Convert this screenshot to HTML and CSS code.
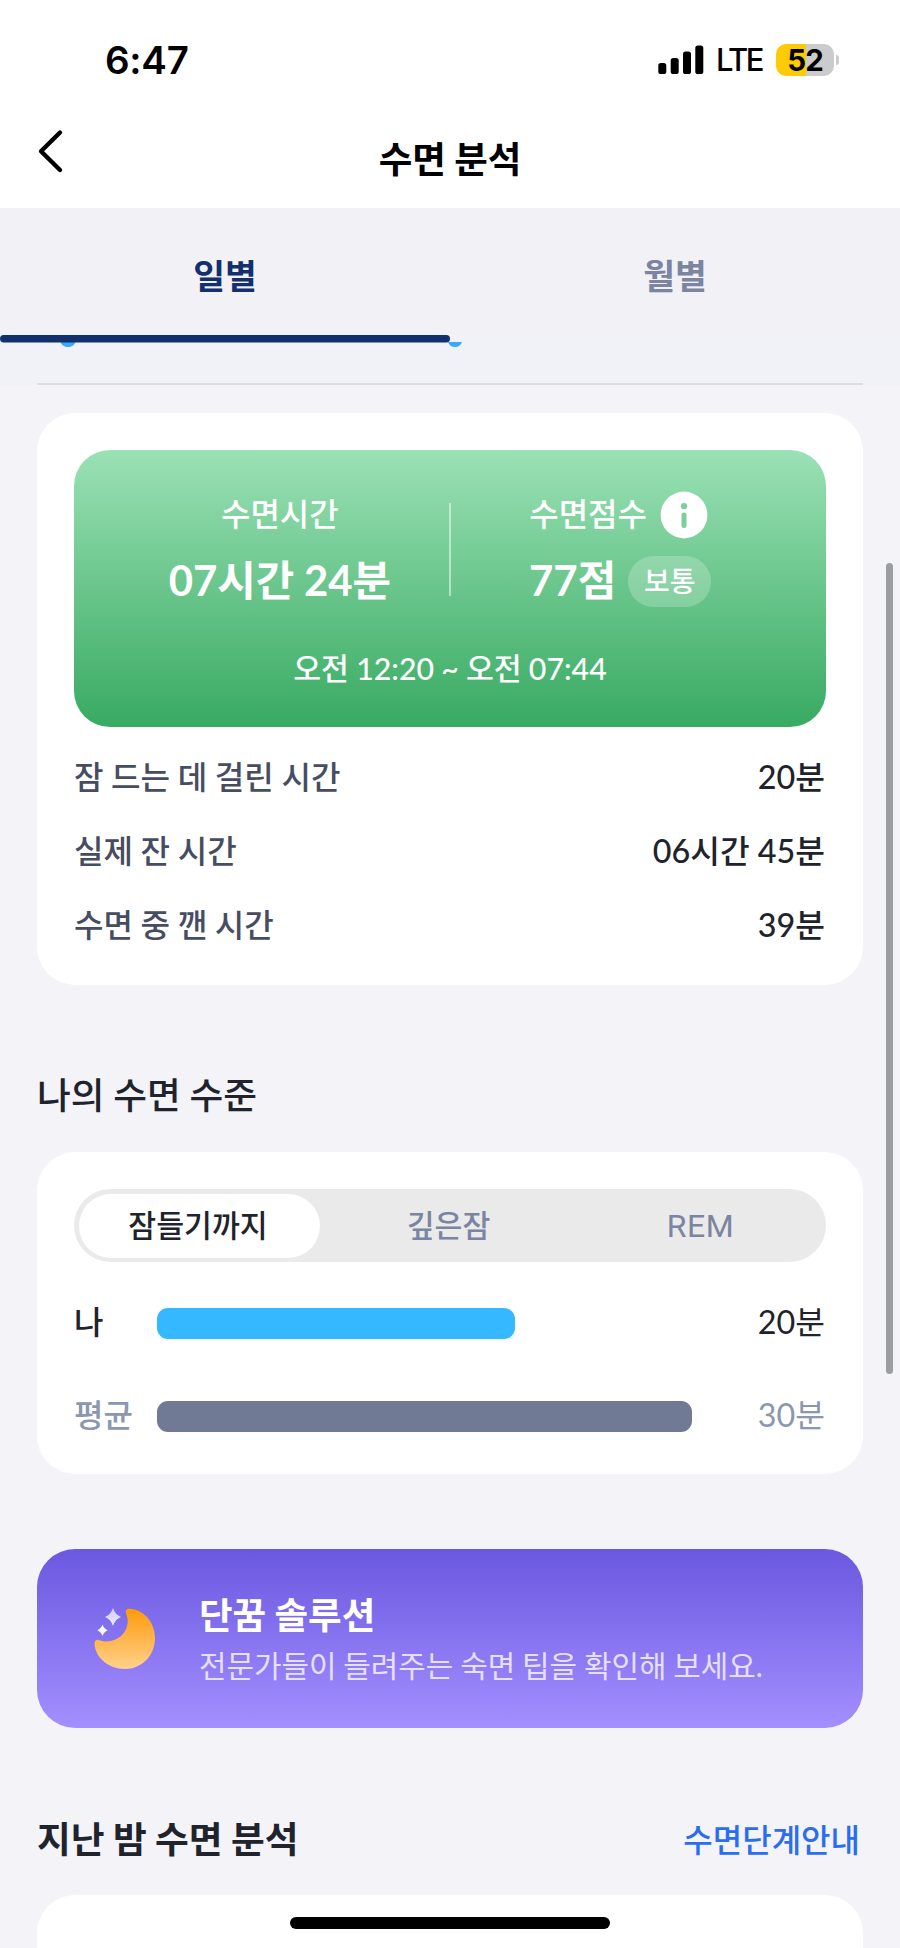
FILE: index.html
```html
<!DOCTYPE html>
<html lang="ko">
<head>
<meta charset="utf-8">
<title>수면 분석</title>
<link rel="stylesheet" href="styles.css">
</head>
<body>
<div class="screen">
  <header class="top">
    <div class="status">
      <span class="clock">6:47</span>
      <div class="status-right">
        <svg class="signal" width="46" height="30" viewBox="0 0 46 30"><rect x="0.3" y="18" width="8" height="11" rx="2.6"/><rect x="12.7" y="13" width="8" height="16" rx="2.6"/><rect x="25" y="6.5" width="8" height="22.5" rx="2.6"/><rect x="37.3" y="0.5" width="8" height="28.5" rx="2.6"/></svg>
        <span class="lte">LTE</span>
        <div class="battery"><span>52</span></div>
        <i class="nub"></i>
      </div>
    </div>
    <div class="nav">
      <svg class="back" width="30" height="50" viewBox="0 0 30 50"><path d="M24 6.500 5 25.300 24 44" fill="none" stroke="#000" stroke-width="4.400" stroke-linecap="round" stroke-linejoin="round"/></svg>
      <h1>수면 분석</h1>
    </div>
  </header>
  <nav class="tabs">
    <span class="tab active">일별</span>
    <span class="tab">월별</span>
  </nav>
  <div class="chart-end">
    <svg width="900" height="12" viewBox="0 0 900 12"><path d="M60.500 7h15c-1 3-4 5-7.500 5s-6.500-2-7.500-5zM448 7h14c-1 3-3.500 5-7 5s-6-2-7-5z" fill="#3aa9f7"/><rect width="450" height="7.500" rx="3.700" fill="#122f6e"/></svg>
  </div>
  <main>
    <section class="card summary">
      <div class="green">
        <div class="cols">
          <div class="col">
            <div class="label">수면시간</div>
            <div class="value">07시간 24분</div>
          </div>
          <i class="rule"></i>
          <div class="col">
            <div class="label">수면점수<svg class="info" width="48" height="48" viewBox="0 0 48 48"><circle cx="24" cy="24" r="23.400" fill="#fff"/><circle cx="24" cy="15.200" r="3.100" fill="#7bcf9b"/><rect x="21.500" y="21.500" width="5" height="15.500" rx="2.500" fill="#7bcf9b"/></svg></div>
            <div class="value">77점<span class="pill">보통</span></div>
          </div>
        </div>
        <div class="range">오전 12:20 ~ 오전 07:44</div>
      </div>
      <dl class="stats">
        <div><dt>잠 드는 데 걸린 시간</dt><dd>20분</dd></div>
        <div><dt>실제 잔 시간</dt><dd>06시간 45분</dd></div>
        <div><dt>수면 중 깬 시간</dt><dd>39분</dd></div>
      </dl>
    </section>
    <h2 class="level-title">나의 수면 수준</h2>
    <section class="card level">
      <div class="segment"><span class="on">잠들기까지</span><span>깊은잠</span><span class="rem">REM</span></div>
      <div class="bar-row"><span class="who">나</span><div class="track"><div class="bar me"></div></div><span class="amount">20분</span></div>
      <div class="bar-row avg"><span class="who">평균</span><div class="track"><div class="bar"></div></div><span class="amount">30분</span></div>
    </section>
    <section class="banner">
      <svg class="moon" width="64" height="64" viewBox="0 0 64 64">
        <defs>
          <linearGradient id="moon" x1="0" y1="0" x2="0" y2="1"><stop offset="0" stop-color="#ff9a0a"/><stop offset="1" stop-color="#ffd18c"/></linearGradient>
          <linearGradient id="star" x1="0" y1="0" x2="0" y2="1"><stop offset="0" stop-color="#d3c9ff"/><stop offset="1" stop-color="#f0ecff"/></linearGradient>
        </defs>
        <path d="M36.300 1.800C50.500 2.500 62 15 62 31C62 48.500 49 62 32 62C15 62 2 50 1.500 36.500C1.500 33.500 4 32 6.500 33.200C20 37.800 34.700 28.500 34.700 14C34.700 11 33.800 8.500 33 6C32.200 3.500 33.800 1.500 36.300 1.800Z" fill="url(#moon)"/>
        <path d="M20 1q2.200 6.800 8 9q-5.800 2.200-8 9q-2.200-6.800-8-9q5.800-2.200 8-9z" fill="url(#star)"/>
        <path d="M9.500 17.500q1.500 4.300 5.200 5.800q-3.700 1.500-5.200 5.800q-1.500-4.300-5.200-5.800q3.700-1.500 5.200-5.800z" fill="#f8f6ff"/>
      </svg>
      <div><h3>단꿈 솔루션</h3><p>전문가들이 들려주는 숙면 팁을 확인해 보세요.</p></div>
    </section>
    <div class="night-head"><h2>지난 밤 수면 분석</h2><a>수면단계안내</a></div>
    <section class="card next"></section>
  </main>
  <i class="scrollbar"></i>
  <i class="home"></i>
</div>
</body>
</html>
```
FILE: styles.css
```css
* { box-sizing: border-box; margin: 0; padding: 0; }
body { font-family: Lato, "Noto Sans CJK KR", sans-serif; color: #20232c; background: #f3f3f8; }
.screen { position: relative; width: 900px; height: 1948px; overflow: hidden; background: #f3f3f8; word-spacing: -.5px; }
svg { display: block; flex: none; }

.top { height: 208px; background: #fff; }
.status { height: 118px; padding: 44px 61px 0 105px; display: flex; justify-content: space-between; align-items: flex-start; font-family: Inter, sans-serif; color: #000; }
.clock { font-size: 38.500px; font-weight: 600; line-height: 33px; letter-spacing: -.3px; }
.status-right { display: flex; align-items: center; height: 32px; }
.lte { margin-left: 12px; width: 60px; font-size: 31px; font-weight: 500; letter-spacing: -2.500px; line-height: 34px; }
.battery { width: 58px; height: 32px; border-radius: 10px; background: linear-gradient(90deg, #fccb05 30px, #cbcbcb 30px); text-align: center; font-size: 29.500px; font-weight: 700; line-height: 32px; letter-spacing: -1px; }
.nub { width: 3px; height: 10px; margin-left: 2px; border-radius: 0 4px 4px 0; background: #cbcbcb; }
.nav { display: grid; grid-template-columns: 1fr auto 1fr; padding: 8px 36px 0 36px; }
h1 { font-size: 36.500px; font-weight: 700; line-height: 50px; margin-top: 8px; color: #000; }

.tabs { display: grid; grid-template-columns: 1fr 1fr; height: 127px; background: #f1f1f6; }
.tab { text-align: center; padding-top: 43px; font-size: 34.600px; font-weight: 700; line-height: 50px; color: #7b84a0; }
.tab.active { color: #122f6e; }
.chart-end { height: 50px; margin-bottom: 28px; background: linear-gradient(#dcdce2, #dcdce2) 37px 48px / 826px 2px no-repeat, #f1f2f7; }

main { padding: 0 37px; }
.card { background: #fff; border-radius: 38px; padding: 37px; }
.summary { height: 572px; }
.green { height: 277px; border-radius: 36px; padding: 40px 37px 0; background: linear-gradient(#9be1b5, #38aa62); color: #fff; }
.cols { display: flex; }
.col { flex: 1; display: flex; flex-direction: column; align-items: center; }
.label { height: 48px; display: flex; align-items: center; gap: 14px; font-size: 32px; line-height: 45px; padding-bottom: 2px; font-weight: 500; }
.label .info { margin: 3px 3px 0 -1px; }
.value { height: 62px; margin-top: 12px; display: flex; align-items: center; font-size: 41.900px; font-weight: 700; white-space: pre; line-height: 59px; padding-bottom: 1px; }
.pill { width: 83px; height: 51px; border-radius: 25.500px; margin: 1px 0 0 12px; background: rgba(255,255,255,.22); font-size: 28px; font-weight: 500; line-height: 50px; text-align: center; }
.rule { width: 2.500px; height: 93px; margin-top: 13px; background: rgba(255,255,255,.5); }
.range { margin-top: 34px; text-align: center; font-size: 30.300px; font-weight: 500; line-height: 44px; }
.stats { padding-top: 13px; }
.stats div { display: flex; justify-content: space-between; height: 74px; line-height: 74px; font-size: 32.100px; font-weight: 500; }
.stats dt { color: #464d62; }
.stats dd { color: #20232c; font-size: 32.300px; margin-right: 1px; word-spacing: 0; }

h2 { font-size: 36.700px; font-weight: 700; line-height: 54px; }
.level-title { margin-top: 83px; font-weight: 500; }
.level { height: 322px; margin-top: 30px; }
.segment { height: 73px; border-radius: 36.500px; padding: 4.500px; background: #eaeaea; display: grid; grid-template-columns: 241px 1fr 242px; text-align: center; font-size: 30.300px; line-height: 62px; color: #7b84a0; font-weight: 500; }
.segment span { padding-right: 2px; }
.segment .on { background: #fff; border-radius: 32px; color: #20232c; }
.segment .rem { font-family: Roboto, sans-serif; font-size: 32px; line-height: 64px; font-weight: 400; letter-spacing: .5px; padding: 0; }
.bar-row { display: flex; align-items: center; height: 60px; margin-top: 31px; font-size: 32px; font-weight: 500; }
.bar-row.avg { margin-top: 33px; color: #8b97ae; }
.bar-row span { padding-bottom: 7px; }
.who { width: 83px; }
.track { flex: 1; }
.bar { width: 535px; height: 31px; border-radius: 11px; background: #717a94; }
.bar.me { width: 358px; background: #35b8ff; }
.amount { font-weight: 400; font-size: 32.300px; margin-right: 1px; }

.banner { height: 179px; margin-top: 75px; border-radius: 38px; padding: 0 56px; display: flex; align-items: center; gap: 42px; background: linear-gradient(#6a58e0, #a38fff); color: #fff; }
.banner h3 { font-size: 36.500px; line-height: 52px; font-weight: 700; }
.banner p { font-size: 29.900px; line-height: 48px; color: #e6e0ff; white-space: nowrap; word-spacing: -.8px; }
.night-head { display: flex; justify-content: space-between; align-items: center; height: 54px; margin-top: 84px; padding: 0 3px 0 0; }
.night-head a { font-size: 32px; font-weight: 500; color: #2a6df0; padding-bottom: 2px; }
.next { height: 100px; margin-top: 29px; }

.scrollbar { position: absolute; left: 886px; top: 563px; width: 7px; height: 811px; border-radius: 4px; background: #9c9da0; }
.home { position: absolute; left: 290px; top: 1917px; width: 320px; height: 12px; border-radius: 6px; background: #000; }
```
